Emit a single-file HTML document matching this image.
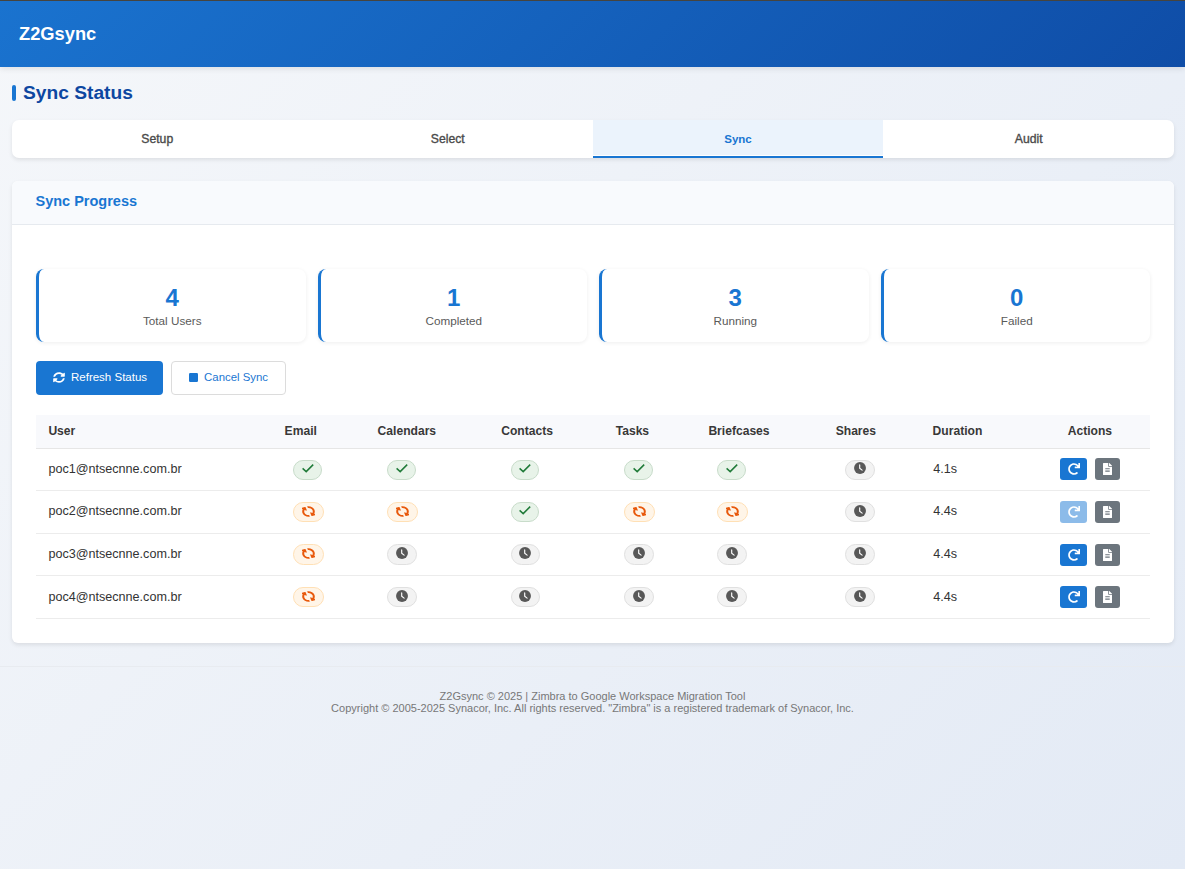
<!DOCTYPE html>
<html><head><meta charset="utf-8">
<style>
*{box-sizing:border-box;margin:0;padding:0}
html,body{width:1185px;height:869px;overflow:hidden}
body{font-family:"Liberation Sans",sans-serif;background:linear-gradient(135deg,#f5f7fa 0%,#e3eaf5 100%);position:relative;color:#333}
.topline{position:absolute;left:0;top:0;width:1185px;height:1px;background:#48463f}
.hdr{position:absolute;left:0;top:1px;width:1185px;height:66px;background:linear-gradient(135deg,#1a73cf 0%,#0f4da7 100%);box-shadow:0 2px 6px rgba(0,0,0,.09)}
.hdr .logo{position:absolute;left:19px;top:22.8px;font-size:18.3px;font-weight:bold;color:#fff;line-height:20px}
.ptitle{position:absolute;left:12px;top:84px;height:18px}
.ptitle .bar{position:absolute;left:0;top:1px;width:4px;height:16px;background:#1976d2;border-radius:2px}
.ptitle .txt{position:absolute;left:11px;top:-2px;font-size:19.2px;font-weight:bold;color:#0d47a1;white-space:nowrap;line-height:22px}
.tabs{position:absolute;left:12px;top:120px;width:1162px;height:38px;background:#fff;border-radius:7px;box-shadow:0 2px 4px rgba(0,0,0,.09);overflow:hidden}
.tab{position:absolute;top:0;height:38px;width:290.5px;text-align:center;font-size:12.2px;font-weight:normal;color:#4a4a4a;line-height:39px;-webkit-text-stroke:0.35px #4a4a4a}
.tab.active{background:#ebf3fc;color:#1976d2;font-size:11.5px;font-weight:bold;-webkit-text-stroke:0}
.tab.active::after{content:"";position:absolute;left:0;right:0;bottom:0;height:2px;background:#1976d2}
.tab.active::before{content:"";position:absolute;left:0;right:0;bottom:2px;height:1px;background:#fff}
.card{position:absolute;left:12px;top:181px;width:1162px;height:462px;background:#fff;border-radius:6px;box-shadow:0 2px 4px rgba(0,0,0,.09);overflow:hidden}
.card .chd{position:absolute;left:0;top:0;width:100%;height:44px;background:#f8fafd;border-bottom:1px solid #e6eaef}
.card .chd .t{position:absolute;left:23.5px;top:12.4px;font-size:14.5px;font-weight:bold;color:#1976d2;line-height:16px}
.stat{position:absolute;top:88px;width:269.5px;height:73px;background:#fff;border-left:3px solid #1976d2;border-radius:8px;box-shadow:0 1px 4px rgba(0,0,0,.07);text-align:center}
.stat .n{position:absolute;left:0;right:0;top:14.8px;font-size:24px;font-weight:bold;color:#1976d2;line-height:28px}
.stat .l{position:absolute;left:0;right:0;top:45.2px;font-size:11.7px;color:#5a5a5a;line-height:14px}
.btn{position:absolute;top:180px;height:34px;border-radius:4px;font-size:11.5px;line-height:14px;display:flex;align-items:center;white-space:nowrap;padding-bottom:2px}
.btn.primary{left:24px;width:127px;background:#1976d2;color:#fff;padding-left:17px}
.btn.outline{left:159.4px;width:114.3px;background:#fff;color:#1976d2;border:1px solid #dcdcdc;padding-left:16.2px;font-size:11.4px}
.thead{position:absolute;left:36px;top:415px;width:1114px;height:33px;background:#f8f9fc}
.th{position:absolute;top:424px;font-size:12.1px;font-weight:bold;color:#383838;line-height:14px;white-space:nowrap}
.rline{position:absolute;left:36px;width:1114px;height:1px;background:#ececec}
.thead::after{content:"";position:absolute;left:0;right:0;bottom:-1px;height:1px;background:#e6e6e6}
.td{position:absolute;font-size:12.6px;color:#333;line-height:16px;white-space:nowrap}
.pill{position:absolute;height:20.5px;border-radius:10.5px;border:1px solid}
.pill svg.ic{display:block;position:absolute}
.pc{width:28.5px;background:#e8f3e9;border-color:#c8dcca}
.ps{width:30.8px;background:#fff5e8;border-color:#ffe0b5}
.pk{width:29.5px;background:#f3f3f3;border-color:#e0e0e0}
.ab{position:absolute;height:22px;border-radius:3px;display:flex;align-items:center;justify-content:center}
.ab svg{display:block}
.ab.blue{width:27px;background:#1976d2}
.ab.blue.dis{background:#8cbbe9}
.ab.gray{width:25px;background:#6c757d}
footer{position:absolute;left:0;top:666px;width:1185px;border-top:1px solid #e8ebf0;text-align:center;font-size:11px;color:#777;line-height:12.4px;padding-top:23px}
</style></head>
<body>
<div class="topline"></div>
<div class="hdr"><div class="logo">Z2Gsync</div></div>
<div class="ptitle"><div class="bar"></div><div class="txt">Sync Status</div></div>
<div class="tabs">
  <div class="tab" style="left:0">Setup</div>
  <div class="tab" style="left:290.5px">Select</div>
  <div class="tab active" style="left:581px;width:290px">Sync</div>
  <div class="tab" style="left:871.5px">Audit</div>
</div>
<div class="card">
  <div class="chd"><div class="t">Sync Progress</div></div>
  <div class="stat" style="left:24px"><div class="n">4</div><div class="l">Total Users</div></div>
  <div class="stat" style="left:305.5px"><div class="n">1</div><div class="l">Completed</div></div>
  <div class="stat" style="left:587px"><div class="n">3</div><div class="l">Running</div></div>
  <div class="stat" style="left:868.5px"><div class="n">0</div><div class="l">Failed</div></div>
  <div class="btn primary"><svg width="12" height="11" viewBox="0 0 512 512" preserveAspectRatio="none" style="margin-right:6px"><path fill="#fff" d="M370.72 133.28C339.458 104.008 298.888 87.962 255.848 88c-77.458.068-144.328 53.178-162.791 126.85-1.344 5.363-6.122 9.15-11.651 9.15H24.103c-7.498 0-13.194-6.807-11.807-14.176C33.933 94.924 134.813 8 256 8c66.448 0 126.791 26.136 171.315 68.685L463.03 40.97C478.149 25.851 504 36.559 504 57.941V192c0 13.255-10.745 24-24 24H345.941c-21.382 0-32.09-25.851-16.971-40.971l41.75-41.749zM32 296h134.059c21.382 0 32.09 25.851 16.971 40.971l-41.75 41.75c31.262 29.273 71.835 45.319 114.876 45.28 77.418-.07 144.315-53.144 162.787-126.849 1.344-5.363 6.122-9.15 11.651-9.150h57.304c7.498 0 13.194 6.807 11.807 14.176C478.067 417.076 377.187 504 256 504c-66.448 0-126.791-26.136-171.315-68.685L48.97 471.03C33.851 486.149 8 475.441 8 454.059V320c0-13.255 10.745-24 24-24z"/></svg>Refresh Status</div>
  <div class="btn outline"><svg width="9" height="9" viewBox="0 0 448 448" style="margin-right:6.5px"><rect x="0" y="0" width="448" height="448" rx="60" fill="#1976d2"/></svg>Cancel Sync</div>
  <!--TABLE-->
</div>
<div id="tbl">
<div class="thead"></div>
<div class="th" style="left:48.4px">User</div>
<div class="th" style="left:284.6px">Email</div>
<div class="th" style="left:377.6px">Calendars</div>
<div class="th" style="left:501.2px">Contacts</div>
<div class="th" style="left:615.7px">Tasks</div>
<div class="th" style="left:708.4px">Briefcases</div>
<div class="th" style="left:835.7px">Shares</div>
<div class="th" style="left:932.6px">Duration</div>
<div class="th" style="left:1067.7px">Actions</div>
<div class="rline" style="top:490px"></div>
<div class="rline" style="top:533px"></div>
<div class="rline" style="top:575px"></div>
<div class="rline" style="top:618px"></div>
<div class="td" style="left:48.4px;top:460.5px">poc1@ntsecnne.com.br</div>
<div class="pill pc" style="left:293.1px;top:459.5px"><svg class="ic" style="left:7.9px;top:3.6px" width="12" height="9" viewBox="0 0 12 9"><path d="M0.6 4.4 L4.2 7.6 L11.2 0.6" fill="none" stroke="#1f7a38" stroke-width="1.5"/></svg></div>
<div class="pill pc" style="left:387.0px;top:459.5px"><svg class="ic" style="left:7.9px;top:3.6px" width="12" height="9" viewBox="0 0 12 9"><path d="M0.6 4.4 L4.2 7.6 L11.2 0.6" fill="none" stroke="#1f7a38" stroke-width="1.5"/></svg></div>
<div class="pill pc" style="left:510.5px;top:459.5px"><svg class="ic" style="left:7.9px;top:3.6px" width="12" height="9" viewBox="0 0 12 9"><path d="M0.6 4.4 L4.2 7.6 L11.2 0.6" fill="none" stroke="#1f7a38" stroke-width="1.5"/></svg></div>
<div class="pill pc" style="left:624.4px;top:459.5px"><svg class="ic" style="left:7.9px;top:3.6px" width="12" height="9" viewBox="0 0 12 9"><path d="M0.6 4.4 L4.2 7.6 L11.2 0.6" fill="none" stroke="#1f7a38" stroke-width="1.5"/></svg></div>
<div class="pill pc" style="left:717.3px;top:459.5px"><svg class="ic" style="left:7.9px;top:3.6px" width="12" height="9" viewBox="0 0 12 9"><path d="M0.6 4.4 L4.2 7.6 L11.2 0.6" fill="none" stroke="#1f7a38" stroke-width="1.5"/></svg></div>
<div class="pill pk" style="left:845.3px;top:459.5px"><svg class="ic" style="left:7.5px;top:1.9px" width="12" height="12" viewBox="0 0 12 12"><circle cx="6" cy="6" r="5.95" fill="#585858"/><path d="M5.7 2.9 V6.3 L8.1 8.1" fill="none" stroke="#fff" stroke-width="1.15" stroke-linecap="round" stroke-linejoin="round"/></svg></div>
<div class="td" style="left:933.3px;top:460.5px">4.1s</div>
<div class="ab blue" style="left:1060px;top:458.0px"><svg width="12" height="12" viewBox="0 0 512 512"><path fill="#fff" d="M500.33 0h-47.41a12 12 0 0 0-12 12.57l4 82.76A247.42 247.42 0 0 0 256 8C119.34 8 7.9 119.53 8 256.19 8.1 393.07 119.1 504 256 504a247.1 247.1 0 0 0 166.18-63.91 12 12 0 0 0 .48-17.43l-34-34a12 12 0 0 0-16.38-.55A176 176 0 1 1 402.1 157.8l-101.53-4.87a12 12 0 0 0-12.57 12v47.41a12 12 0 0 0 12 12h200.33a12 12 0 0 0 12-12V12a12 12 0 0 0-12-12z"/></svg></div>
<div class="ab gray" style="left:1095px;top:458.0px"><svg width="9" height="12" viewBox="0 0 384 512"><path fill="#fff" d="M224 136V0H24C10.7 0 0 10.7 0 24v464c0 13.3 10.7 24 24 24h336c13.3 0 24-10.7 24-24V160H248c-13.2 0-24-10.8-24-24zm64 236c0 6.6-5.4 12-12 12H108c-6.6 0-12-5.4-12-12v-8c0-6.6 5.4-12 12-12h168c6.6 0 12 5.4 12 12v8zm0-64c0 6.6-5.4 12-12 12H108c-6.6 0-12-5.4-12-12v-8c0-6.6 5.4-12 12-12h168c6.6 0 12 5.4 12 12v8zm0-72v8c0 6.6-5.4 12-12 12H108c-6.6 0-12-5.4-12-12v-8c0-6.6 5.4-12 12-12h168c6.6 0 12 5.4 12 12zm96-114.1v6.1H256V0h6.1c6.4 0 12.5 2.5 17 7l97.9 98c4.5 4.5 7 10.6 7 16.9z"/></svg></div>
<div class="td" style="left:48.4px;top:503.2px">poc2@ntsecnne.com.br</div>
<div class="pill ps" style="left:293.1px;top:501.9px"><svg class="ic" style="left:8.1px;top:3.2px" width="13" height="11" viewBox="0 0 512 512" preserveAspectRatio="none"><g transform="rotate(-110 256 256)"><path fill="#e8590c" d="M370.72 133.28C339.458 104.008 298.888 87.962 255.848 88c-77.458.068-144.328 53.178-162.791 126.85-1.344 5.363-6.122 9.15-11.651 9.15H24.103c-7.498 0-13.194-6.807-11.807-14.176C33.933 94.924 134.813 8 256 8c66.448 0 126.791 26.136 171.315 68.685L463.03 40.97C478.149 25.851 504 36.559 504 57.941V192c0 13.255-10.745 24-24 24H345.941c-21.382 0-32.090-25.851-16.971-40.971l41.75-41.749zM32 296h134.059c21.382 0 32.090 25.851 16.971 40.971l-41.75 41.75c31.262 29.273 71.835 45.319 114.876 45.28 77.418-.07 144.315-53.144 162.787-126.849 1.344-5.363 6.122-9.15 11.651-9.15h57.304c7.498 0 13.194 6.807 11.807 14.176C478.067 417.076 377.187 504 256 504c-66.448 0-126.791-26.136-171.315-68.685L48.970 471.030C33.851 486.149 8 475.441 8 454.059V320c0-13.255 10.745-24 24-24z"/></g></svg></div>
<div class="pill ps" style="left:387.0px;top:501.9px"><svg class="ic" style="left:8.1px;top:3.2px" width="13" height="11" viewBox="0 0 512 512" preserveAspectRatio="none"><g transform="rotate(-110 256 256)"><path fill="#e8590c" d="M370.72 133.28C339.458 104.008 298.888 87.962 255.848 88c-77.458.068-144.328 53.178-162.791 126.85-1.344 5.363-6.122 9.15-11.651 9.15H24.103c-7.498 0-13.194-6.807-11.807-14.176C33.933 94.924 134.813 8 256 8c66.448 0 126.791 26.136 171.315 68.685L463.03 40.97C478.149 25.851 504 36.559 504 57.941V192c0 13.255-10.745 24-24 24H345.941c-21.382 0-32.090-25.851-16.971-40.971l41.75-41.749zM32 296h134.059c21.382 0 32.090 25.851 16.971 40.971l-41.75 41.75c31.262 29.273 71.835 45.319 114.876 45.28 77.418-.07 144.315-53.144 162.787-126.849 1.344-5.363 6.122-9.15 11.651-9.15h57.304c7.498 0 13.194 6.807 11.807 14.176C478.067 417.076 377.187 504 256 504c-66.448 0-126.791-26.136-171.315-68.685L48.970 471.030C33.851 486.149 8 475.441 8 454.059V320c0-13.255 10.745-24 24-24z"/></g></svg></div>
<div class="pill pc" style="left:510.5px;top:501.9px"><svg class="ic" style="left:7.9px;top:3.6px" width="12" height="9" viewBox="0 0 12 9"><path d="M0.6 4.4 L4.2 7.6 L11.2 0.6" fill="none" stroke="#1f7a38" stroke-width="1.5"/></svg></div>
<div class="pill ps" style="left:624.4px;top:501.9px"><svg class="ic" style="left:8.1px;top:3.2px" width="13" height="11" viewBox="0 0 512 512" preserveAspectRatio="none"><g transform="rotate(-110 256 256)"><path fill="#e8590c" d="M370.72 133.28C339.458 104.008 298.888 87.962 255.848 88c-77.458.068-144.328 53.178-162.791 126.85-1.344 5.363-6.122 9.15-11.651 9.15H24.103c-7.498 0-13.194-6.807-11.807-14.176C33.933 94.924 134.813 8 256 8c66.448 0 126.791 26.136 171.315 68.685L463.03 40.97C478.149 25.851 504 36.559 504 57.941V192c0 13.255-10.745 24-24 24H345.941c-21.382 0-32.090-25.851-16.971-40.971l41.75-41.749zM32 296h134.059c21.382 0 32.090 25.851 16.971 40.971l-41.75 41.75c31.262 29.273 71.835 45.319 114.876 45.28 77.418-.07 144.315-53.144 162.787-126.849 1.344-5.363 6.122-9.15 11.651-9.15h57.304c7.498 0 13.194 6.807 11.807 14.176C478.067 417.076 377.187 504 256 504c-66.448 0-126.791-26.136-171.315-68.685L48.970 471.030C33.851 486.149 8 475.441 8 454.059V320c0-13.255 10.745-24 24-24z"/></g></svg></div>
<div class="pill ps" style="left:717.3px;top:501.9px"><svg class="ic" style="left:8.1px;top:3.2px" width="13" height="11" viewBox="0 0 512 512" preserveAspectRatio="none"><g transform="rotate(-110 256 256)"><path fill="#e8590c" d="M370.72 133.28C339.458 104.008 298.888 87.962 255.848 88c-77.458.068-144.328 53.178-162.791 126.85-1.344 5.363-6.122 9.15-11.651 9.15H24.103c-7.498 0-13.194-6.807-11.807-14.176C33.933 94.924 134.813 8 256 8c66.448 0 126.791 26.136 171.315 68.685L463.03 40.97C478.149 25.851 504 36.559 504 57.941V192c0 13.255-10.745 24-24 24H345.941c-21.382 0-32.090-25.851-16.971-40.971l41.75-41.749zM32 296h134.059c21.382 0 32.090 25.851 16.971 40.971l-41.75 41.75c31.262 29.273 71.835 45.319 114.876 45.28 77.418-.07 144.315-53.144 162.787-126.849 1.344-5.363 6.122-9.15 11.651-9.15h57.304c7.498 0 13.194 6.807 11.807 14.176C478.067 417.076 377.187 504 256 504c-66.448 0-126.791-26.136-171.315-68.685L48.970 471.030C33.851 486.149 8 475.441 8 454.059V320c0-13.255 10.745-24 24-24z"/></g></svg></div>
<div class="pill pk" style="left:845.3px;top:501.9px"><svg class="ic" style="left:7.5px;top:1.9px" width="12" height="12" viewBox="0 0 12 12"><circle cx="6" cy="6" r="5.95" fill="#585858"/><path d="M5.7 2.9 V6.3 L8.1 8.1" fill="none" stroke="#fff" stroke-width="1.15" stroke-linecap="round" stroke-linejoin="round"/></svg></div>
<div class="td" style="left:933.3px;top:503.2px">4.4s</div>
<div class="ab blue dis" style="left:1060px;top:501.0px"><svg width="12" height="12" viewBox="0 0 512 512"><path fill="#fff" d="M500.33 0h-47.41a12 12 0 0 0-12 12.57l4 82.76A247.42 247.42 0 0 0 256 8C119.34 8 7.9 119.53 8 256.19 8.1 393.07 119.1 504 256 504a247.1 247.1 0 0 0 166.18-63.91 12 12 0 0 0 .48-17.43l-34-34a12 12 0 0 0-16.38-.55A176 176 0 1 1 402.1 157.8l-101.53-4.87a12 12 0 0 0-12.57 12v47.41a12 12 0 0 0 12 12h200.33a12 12 0 0 0 12-12V12a12 12 0 0 0-12-12z"/></svg></div>
<div class="ab gray" style="left:1095px;top:501.0px"><svg width="9" height="12" viewBox="0 0 384 512"><path fill="#fff" d="M224 136V0H24C10.7 0 0 10.7 0 24v464c0 13.3 10.7 24 24 24h336c13.3 0 24-10.7 24-24V160H248c-13.2 0-24-10.8-24-24zm64 236c0 6.6-5.4 12-12 12H108c-6.6 0-12-5.4-12-12v-8c0-6.6 5.4-12 12-12h168c6.6 0 12 5.4 12 12v8zm0-64c0 6.6-5.4 12-12 12H108c-6.6 0-12-5.4-12-12v-8c0-6.6 5.4-12 12-12h168c6.6 0 12 5.4 12 12v8zm0-72v8c0 6.6-5.4 12-12 12H108c-6.6 0-12-5.4-12-12v-8c0-6.6 5.4-12 12-12h168c6.6 0 12 5.4 12 12zm96-114.1v6.1H256V0h6.1c6.4 0 12.5 2.5 17 7l97.9 98c4.5 4.5 7 10.6 7 16.9z"/></svg></div>
<div class="td" style="left:48.4px;top:545.5px">poc3@ntsecnne.com.br</div>
<div class="pill ps" style="left:293.1px;top:544.3px"><svg class="ic" style="left:8.1px;top:3.2px" width="13" height="11" viewBox="0 0 512 512" preserveAspectRatio="none"><g transform="rotate(-110 256 256)"><path fill="#e8590c" d="M370.72 133.28C339.458 104.008 298.888 87.962 255.848 88c-77.458.068-144.328 53.178-162.791 126.85-1.344 5.363-6.122 9.15-11.651 9.15H24.103c-7.498 0-13.194-6.807-11.807-14.176C33.933 94.924 134.813 8 256 8c66.448 0 126.791 26.136 171.315 68.685L463.03 40.97C478.149 25.851 504 36.559 504 57.941V192c0 13.255-10.745 24-24 24H345.941c-21.382 0-32.090-25.851-16.971-40.971l41.75-41.749zM32 296h134.059c21.382 0 32.090 25.851 16.971 40.971l-41.75 41.75c31.262 29.273 71.835 45.319 114.876 45.28 77.418-.07 144.315-53.144 162.787-126.849 1.344-5.363 6.122-9.15 11.651-9.15h57.304c7.498 0 13.194 6.807 11.807 14.176C478.067 417.076 377.187 504 256 504c-66.448 0-126.791-26.136-171.315-68.685L48.970 471.030C33.851 486.149 8 475.441 8 454.059V320c0-13.255 10.745-24 24-24z"/></g></svg></div>
<div class="pill pk" style="left:387.0px;top:544.3px"><svg class="ic" style="left:7.5px;top:1.9px" width="12" height="12" viewBox="0 0 12 12"><circle cx="6" cy="6" r="5.95" fill="#585858"/><path d="M5.7 2.9 V6.3 L8.1 8.1" fill="none" stroke="#fff" stroke-width="1.15" stroke-linecap="round" stroke-linejoin="round"/></svg></div>
<div class="pill pk" style="left:510.5px;top:544.3px"><svg class="ic" style="left:7.5px;top:1.9px" width="12" height="12" viewBox="0 0 12 12"><circle cx="6" cy="6" r="5.95" fill="#585858"/><path d="M5.7 2.9 V6.3 L8.1 8.1" fill="none" stroke="#fff" stroke-width="1.15" stroke-linecap="round" stroke-linejoin="round"/></svg></div>
<div class="pill pk" style="left:624.4px;top:544.3px"><svg class="ic" style="left:7.5px;top:1.9px" width="12" height="12" viewBox="0 0 12 12"><circle cx="6" cy="6" r="5.95" fill="#585858"/><path d="M5.7 2.9 V6.3 L8.1 8.1" fill="none" stroke="#fff" stroke-width="1.15" stroke-linecap="round" stroke-linejoin="round"/></svg></div>
<div class="pill pk" style="left:717.3px;top:544.3px"><svg class="ic" style="left:7.5px;top:1.9px" width="12" height="12" viewBox="0 0 12 12"><circle cx="6" cy="6" r="5.95" fill="#585858"/><path d="M5.7 2.9 V6.3 L8.1 8.1" fill="none" stroke="#fff" stroke-width="1.15" stroke-linecap="round" stroke-linejoin="round"/></svg></div>
<div class="pill pk" style="left:845.3px;top:544.3px"><svg class="ic" style="left:7.5px;top:1.9px" width="12" height="12" viewBox="0 0 12 12"><circle cx="6" cy="6" r="5.95" fill="#585858"/><path d="M5.7 2.9 V6.3 L8.1 8.1" fill="none" stroke="#fff" stroke-width="1.15" stroke-linecap="round" stroke-linejoin="round"/></svg></div>
<div class="td" style="left:933.3px;top:545.5px">4.4s</div>
<div class="ab blue" style="left:1060px;top:543.5px"><svg width="12" height="12" viewBox="0 0 512 512"><path fill="#fff" d="M500.33 0h-47.41a12 12 0 0 0-12 12.57l4 82.76A247.42 247.42 0 0 0 256 8C119.34 8 7.9 119.53 8 256.19 8.1 393.07 119.1 504 256 504a247.1 247.1 0 0 0 166.18-63.91 12 12 0 0 0 .48-17.43l-34-34a12 12 0 0 0-16.38-.55A176 176 0 1 1 402.1 157.8l-101.53-4.87a12 12 0 0 0-12.57 12v47.41a12 12 0 0 0 12 12h200.33a12 12 0 0 0 12-12V12a12 12 0 0 0-12-12z"/></svg></div>
<div class="ab gray" style="left:1095px;top:543.5px"><svg width="9" height="12" viewBox="0 0 384 512"><path fill="#fff" d="M224 136V0H24C10.7 0 0 10.7 0 24v464c0 13.3 10.7 24 24 24h336c13.3 0 24-10.7 24-24V160H248c-13.2 0-24-10.8-24-24zm64 236c0 6.6-5.4 12-12 12H108c-6.6 0-12-5.4-12-12v-8c0-6.6 5.4-12 12-12h168c6.6 0 12 5.4 12 12v8zm0-64c0 6.6-5.4 12-12 12H108c-6.6 0-12-5.4-12-12v-8c0-6.6 5.4-12 12-12h168c6.6 0 12 5.4 12 12v8zm0-72v8c0 6.6-5.4 12-12 12H108c-6.6 0-12-5.4-12-12v-8c0-6.6 5.4-12 12-12h168c6.6 0 12 5.4 12 12zm96-114.1v6.1H256V0h6.1c6.4 0 12.5 2.5 17 7l97.9 98c4.5 4.5 7 10.6 7 16.9z"/></svg></div>
<div class="td" style="left:48.4px;top:588.8px">poc4@ntsecnne.com.br</div>
<div class="pill ps" style="left:293.1px;top:586.9px"><svg class="ic" style="left:8.1px;top:3.2px" width="13" height="11" viewBox="0 0 512 512" preserveAspectRatio="none"><g transform="rotate(-110 256 256)"><path fill="#e8590c" d="M370.72 133.28C339.458 104.008 298.888 87.962 255.848 88c-77.458.068-144.328 53.178-162.791 126.85-1.344 5.363-6.122 9.15-11.651 9.15H24.103c-7.498 0-13.194-6.807-11.807-14.176C33.933 94.924 134.813 8 256 8c66.448 0 126.791 26.136 171.315 68.685L463.03 40.97C478.149 25.851 504 36.559 504 57.941V192c0 13.255-10.745 24-24 24H345.941c-21.382 0-32.090-25.851-16.971-40.971l41.75-41.749zM32 296h134.059c21.382 0 32.090 25.851 16.971 40.971l-41.75 41.75c31.262 29.273 71.835 45.319 114.876 45.28 77.418-.07 144.315-53.144 162.787-126.849 1.344-5.363 6.122-9.15 11.651-9.15h57.304c7.498 0 13.194 6.807 11.807 14.176C478.067 417.076 377.187 504 256 504c-66.448 0-126.791-26.136-171.315-68.685L48.970 471.030C33.851 486.149 8 475.441 8 454.059V320c0-13.255 10.745-24 24-24z"/></g></svg></div>
<div class="pill pk" style="left:387.0px;top:586.9px"><svg class="ic" style="left:7.5px;top:1.9px" width="12" height="12" viewBox="0 0 12 12"><circle cx="6" cy="6" r="5.95" fill="#585858"/><path d="M5.7 2.9 V6.3 L8.1 8.1" fill="none" stroke="#fff" stroke-width="1.15" stroke-linecap="round" stroke-linejoin="round"/></svg></div>
<div class="pill pk" style="left:510.5px;top:586.9px"><svg class="ic" style="left:7.5px;top:1.9px" width="12" height="12" viewBox="0 0 12 12"><circle cx="6" cy="6" r="5.95" fill="#585858"/><path d="M5.7 2.9 V6.3 L8.1 8.1" fill="none" stroke="#fff" stroke-width="1.15" stroke-linecap="round" stroke-linejoin="round"/></svg></div>
<div class="pill pk" style="left:624.4px;top:586.9px"><svg class="ic" style="left:7.5px;top:1.9px" width="12" height="12" viewBox="0 0 12 12"><circle cx="6" cy="6" r="5.95" fill="#585858"/><path d="M5.7 2.9 V6.3 L8.1 8.1" fill="none" stroke="#fff" stroke-width="1.15" stroke-linecap="round" stroke-linejoin="round"/></svg></div>
<div class="pill pk" style="left:717.3px;top:586.9px"><svg class="ic" style="left:7.5px;top:1.9px" width="12" height="12" viewBox="0 0 12 12"><circle cx="6" cy="6" r="5.95" fill="#585858"/><path d="M5.7 2.9 V6.3 L8.1 8.1" fill="none" stroke="#fff" stroke-width="1.15" stroke-linecap="round" stroke-linejoin="round"/></svg></div>
<div class="pill pk" style="left:845.3px;top:586.9px"><svg class="ic" style="left:7.5px;top:1.9px" width="12" height="12" viewBox="0 0 12 12"><circle cx="6" cy="6" r="5.95" fill="#585858"/><path d="M5.7 2.9 V6.3 L8.1 8.1" fill="none" stroke="#fff" stroke-width="1.15" stroke-linecap="round" stroke-linejoin="round"/></svg></div>
<div class="td" style="left:933.3px;top:588.8px">4.4s</div>
<div class="ab blue" style="left:1060px;top:586.3px"><svg width="12" height="12" viewBox="0 0 512 512"><path fill="#fff" d="M500.33 0h-47.41a12 12 0 0 0-12 12.57l4 82.76A247.42 247.42 0 0 0 256 8C119.34 8 7.9 119.53 8 256.19 8.1 393.07 119.1 504 256 504a247.1 247.1 0 0 0 166.18-63.91 12 12 0 0 0 .48-17.43l-34-34a12 12 0 0 0-16.38-.55A176 176 0 1 1 402.1 157.8l-101.53-4.87a12 12 0 0 0-12.57 12v47.41a12 12 0 0 0 12 12h200.33a12 12 0 0 0 12-12V12a12 12 0 0 0-12-12z"/></svg></div>
<div class="ab gray" style="left:1095px;top:586.3px"><svg width="9" height="12" viewBox="0 0 384 512"><path fill="#fff" d="M224 136V0H24C10.7 0 0 10.7 0 24v464c0 13.3 10.7 24 24 24h336c13.3 0 24-10.7 24-24V160H248c-13.2 0-24-10.8-24-24zm64 236c0 6.6-5.4 12-12 12H108c-6.6 0-12-5.4-12-12v-8c0-6.6 5.4-12 12-12h168c6.6 0 12 5.4 12 12v8zm0-64c0 6.6-5.4 12-12 12H108c-6.6 0-12-5.4-12-12v-8c0-6.6 5.4-12 12-12h168c6.6 0 12 5.4 12 12v8zm0-72v8c0 6.6-5.4 12-12 12H108c-6.6 0-12-5.4-12-12v-8c0-6.6 5.4-12 12-12h168c6.6 0 12 5.4 12 12zm96-114.1v6.1H256V0h6.1c6.4 0 12.5 2.5 17 7l97.9 98c4.5 4.5 7 10.6 7 16.9z"/></svg></div>
</div>
<footer>Z2Gsync © 2025 | Zimbra to Google Workspace Migration Tool<br>Copyright © 2005-2025 Synacor, Inc. All rights reserved. "Zimbra" is a registered trademark of Synacor, Inc.</footer>
</body></html>
